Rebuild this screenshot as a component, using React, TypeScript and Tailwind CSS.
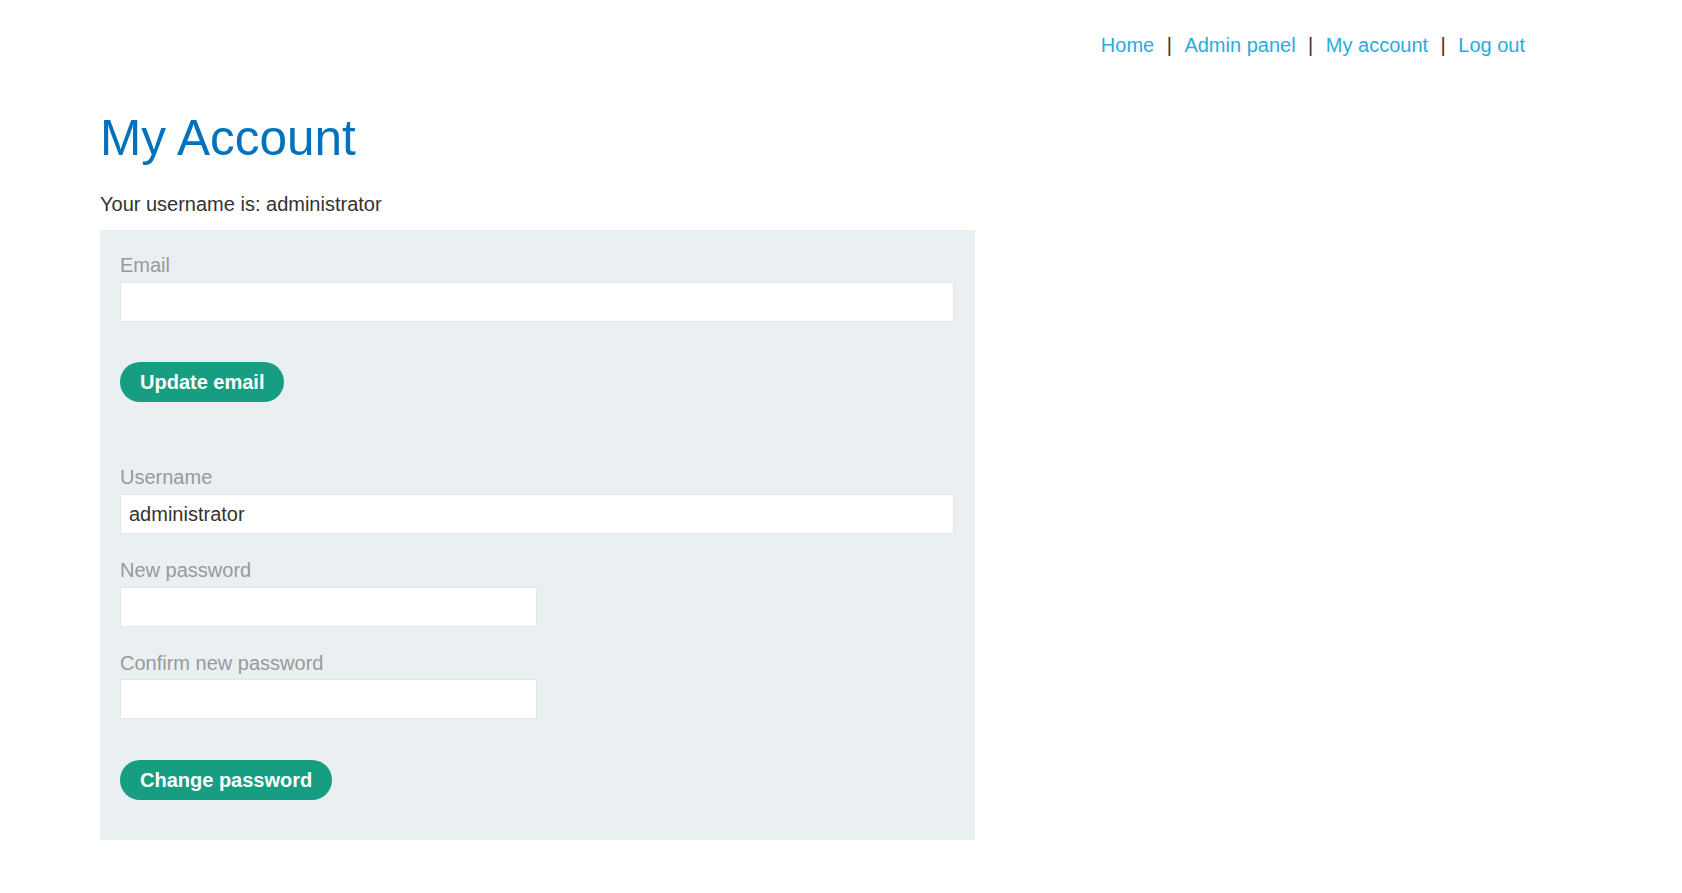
export default function App() {
  const navLinks = ['Home', 'Admin panel', 'My account', 'Log out'];

  return (
    <div className="min-h-screen bg-white text-[#333332] font-['Liberation_Sans',Arial,sans-serif]">
      {/* Top navigation */}
      <header className="flex justify-end pt-[33px] pr-[157px] text-[20px] leading-[24px]">
        {navLinks.map((link, i) => (
          <div key={link} className="flex">
            {i > 0 && <span className="mx-[12.5px] text-[#333332]">|</span>}
            <a href="#" className="text-[#29abe2] no-underline">
              {link}
            </a>
          </div>
        ))}
      </header>

      <main className="pl-[100px]">
        <h1 className="mt-[53px] text-[49.5px] leading-[56px] text-[#0071bc]">My Account</h1>
        <p className="mt-[26px] text-[20px] leading-[24px]">Your username is: administrator</p>

        {/* Account form panel */}
        <div className="mt-[14px] w-[875px] bg-[#eaeff2] pl-[20px] pr-[21px] pt-[23px] pb-[40px]">
          <label className="block text-[20px] leading-[24px] text-[#999999] mb-[5px]">Email</label>
          <input
            type="email"
            className="block w-[834px] h-[40px] bg-white border border-[#e6e6e6] px-[8px] text-[20px] outline-none"
          />
          <button className="mt-[40px] h-[40px] px-[20px] rounded-[20px] bg-[#169d82] text-white font-bold text-[20px] leading-[24px]">
            Update email
          </button>

          <label className="mt-[63px] block text-[20px] leading-[24px] text-[#999999] mb-[5px]">Username</label>
          <input
            type="text"
            defaultValue="administrator"
            className="block w-[834px] h-[40px] bg-white border border-[#e6e6e6] px-[8px] text-[20px] text-[#333332] outline-none"
          />

          <label className="mt-[24px] block text-[20px] leading-[24px] text-[#999999] mb-[5px]">New password</label>
          <input
            type="password"
            className="block w-[417px] h-[40px] bg-white border border-[#e6e6e6] px-[8px] text-[20px] outline-none"
          />

          <label className="mt-[24px] block text-[20px] leading-[24px] text-[#999999] mb-[4px]">Confirm new password</label>
          <input
            type="password"
            className="block w-[417px] h-[40px] bg-white border border-[#e6e6e6] px-[8px] text-[20px] outline-none"
          />

          <button className="mt-[41px] h-[40px] px-[20px] rounded-[20px] bg-[#169d82] text-white font-bold text-[20px] leading-[24px]">
            Change password
          </button>
        </div>
      </main>
    </div>
  );
}
